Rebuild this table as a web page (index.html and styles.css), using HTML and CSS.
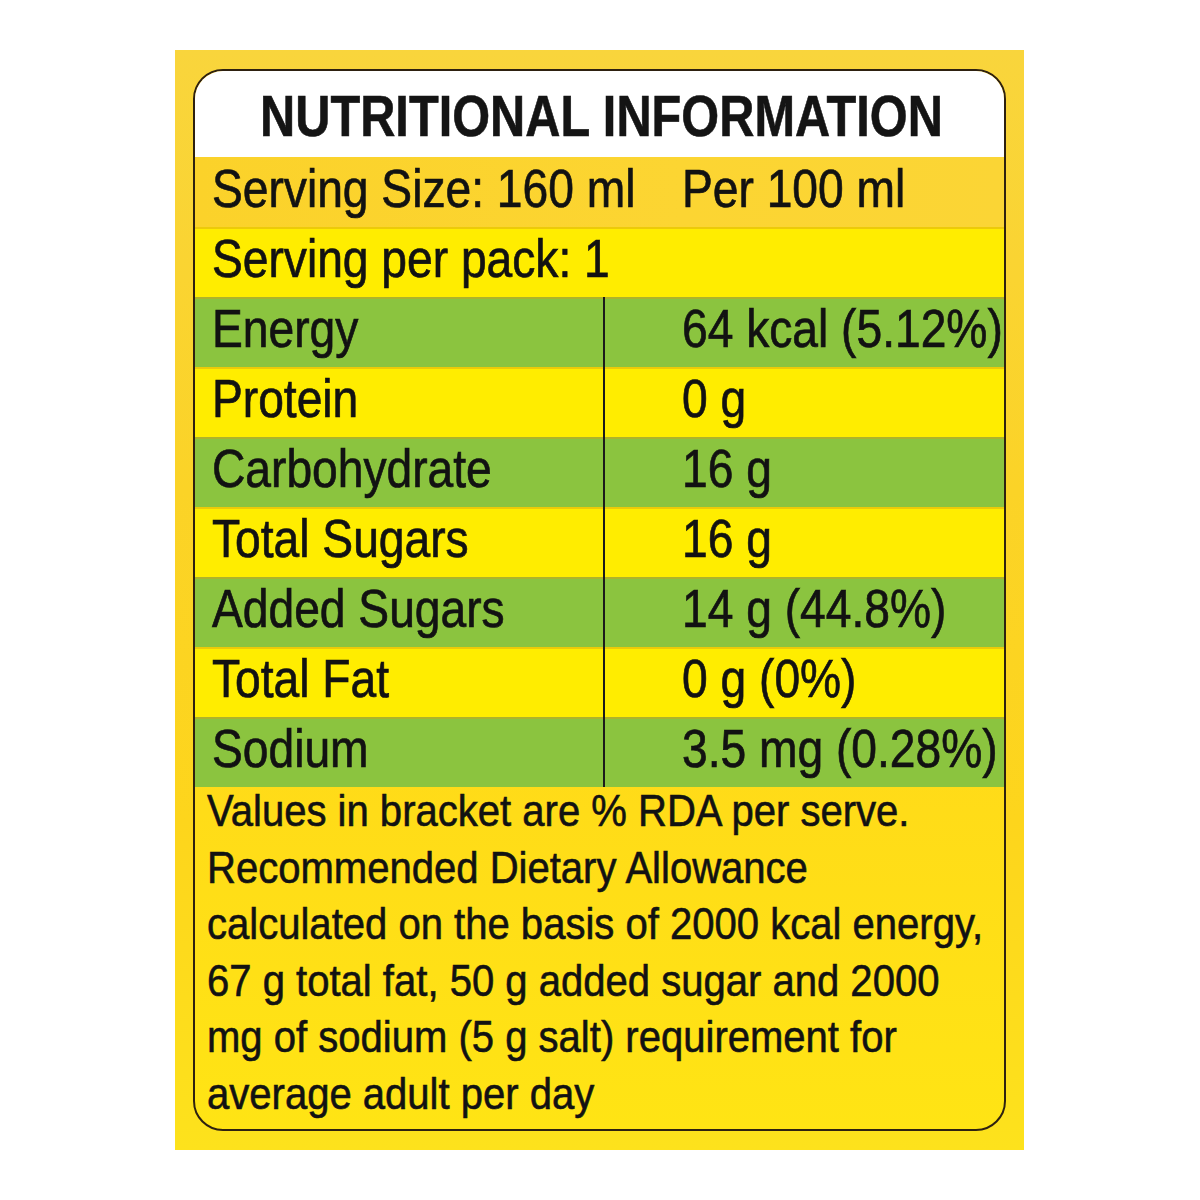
FILE: index.html
```html
<!DOCTYPE html>
<html lang="en">
<head>
<meta charset="utf-8">
<title>Nutritional Information</title>
<link rel="stylesheet" href="styles.css">
</head>
<body>
<div class="panel">
  <div class="label">
    <div class="title"><span class="sq-title">NUTRITIONAL INFORMATION</span></div>
    <div class="row gold">
      <div class="cell"><span class="sq">Serving Size: 160 ml</span></div>
      <div class="cell val nodiv"><span class="sq">Per 100 ml</span></div>
    </div>
    <div class="row yellow">
      <div class="cell"><span class="sq">Serving per pack: 1</span></div>
      <div class="cell val nodiv"></div>
    </div>
    <div class="row green">
      <div class="cell"><span class="sq">Energy</span></div>
      <div class="cell val"><span class="sq">64 kcal (5.12%)</span></div>
    </div>
    <div class="row yellow">
      <div class="cell"><span class="sq">Protein</span></div>
      <div class="cell val"><span class="sq">0 g</span></div>
    </div>
    <div class="row green">
      <div class="cell"><span class="sq">Carbohydrate</span></div>
      <div class="cell val"><span class="sq">16 g</span></div>
    </div>
    <div class="row yellow">
      <div class="cell"><span class="sq">Total Sugars</span></div>
      <div class="cell val"><span class="sq">16 g</span></div>
    </div>
    <div class="row green">
      <div class="cell"><span class="sq">Added Sugars</span></div>
      <div class="cell val"><span class="sq">14 g (44.8%)</span></div>
    </div>
    <div class="row yellow">
      <div class="cell"><span class="sq">Total Fat</span></div>
      <div class="cell val"><span class="sq">0 g (0%)</span></div>
    </div>
    <div class="row green">
      <div class="cell"><span class="sq">Sodium</span></div>
      <div class="cell val"><span class="sq">3.5 mg (0.28%)</span></div>
    </div>
    <div class="foot">
      <div class="foot-text">Values in bracket are % RDA per serve.<br>Recommended Dietary Allowance<br>calculated on the basis of 2000 kcal energy,<br>67 g total fat, 50 g added sugar and 2000<br>mg of sodium (5 g salt) requirement for<br>average adult per day</div>
    </div>
  </div>
</div>
</body>
</html>
```

FILE: styles.css
```css
html, body {
  margin: 0;
  padding: 0;
  background: #ffffff;
}

body {
  font-family: "Liberation Sans", Arial, sans-serif;
  color: #121212;
}

.panel {
  box-sizing: border-box;
  width: 849px;
  height: 1100px;
  margin: 50px 0 0 175px;
  padding: 19px 18px 19px 18px;
  background: linear-gradient(180deg, #f9d53c 0%, #fbd327 40%, #fdd51c 70%, #fde21c 100%);
}

.label {
  box-sizing: border-box;
  width: 813px;
  height: 1062px;
  border: 2px solid #2e2110;
  border-radius: 30px;
  overflow: hidden;
  display: flex;
  flex-direction: column;
  background: linear-gradient(180deg, #fbca1e 0%, #fdd11c 35%, #ffdc18 70%, #ffe414 100%);
}

.title {
  height: 86px;
  box-sizing: border-box;
  padding-top: 4px;
  background: #ffffff;
  text-align: center;
  font-weight: bold;
  font-size: 58px;
  line-height: 82px;
  white-space: nowrap;
}

.sq-title {
  display: inline-block;
  transform: scaleX(0.84);
  transform-origin: center;
  color: #141414;
  -webkit-text-stroke: 0.6px #141414;
}

.row {
  height: 70px;
  display: grid;
  grid-template-columns: 408px 1fr;
  font-size: 54px;
  line-height: 62px;
  white-space: nowrap;
  -webkit-text-stroke: 0.7px #121212;
}

.row + .row {
  box-shadow: inset 0 2px 0 rgba(214, 160, 20, 0.45);
}

.gold {
  background: linear-gradient(90deg, #fbd22a 0%, #fcd532 60%, #fbd535 100%);
}

.yellow {
  background: #ffed00;
}

.green {
  background: #8bc43f;
}

.cell {
  padding-left: 17px;
}

.cell.val {
  border-left: 2px solid #1b1b1b;
  padding-left: 77px;
}

.cell.val.nodiv {
  border-left-color: transparent;
}

.sq {
  display: inline-block;
  transform: scaleX(0.855);
  transform-origin: left center;
}

.foot {
  flex: 1;
  padding-left: 12px;
}

.foot-text {
  margin-top: -4px;
  font-size: 44px;
  line-height: 56.5px;
  white-space: nowrap;
  transform: scaleX(0.91);
  transform-origin: left top;
  -webkit-text-stroke: 0.6px #121212;
}
```
